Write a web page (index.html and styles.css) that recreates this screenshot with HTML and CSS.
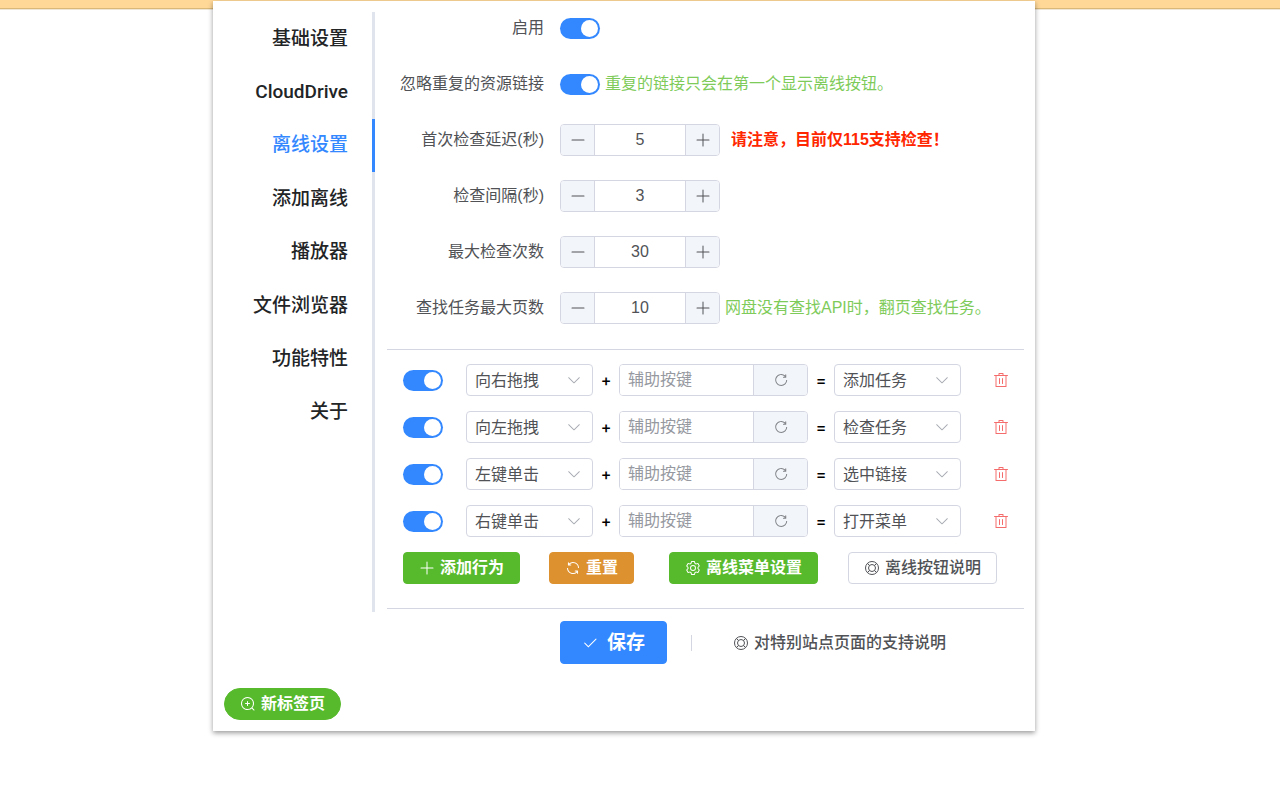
FILE: index.html
```html
<!DOCTYPE html>
<html lang="zh-CN">
<head>
    <meta charset="utf-8">
    <meta name="viewport" content="width=device-width, initial-scale=1">
    <title>离线设置</title>
    <link rel="stylesheet" href="styles.css">
</head>
<body>
    <svg class="sprite" aria-hidden="true">
        <symbol id="plus" viewBox="0 0 1024 1024"><path d="M480 480V128a32 32 0 0 1 64 0v352h352a32 32 0 1 1 0 64H544v352a32 32 0 1 1-64 0V544H128a32 32 0 0 1 0-64z"/></symbol>
        <symbol id="minus" viewBox="0 0 1024 1024"><path d="M128 544h768a32 32 0 1 0 0-64H128a32 32 0 0 0 0 64z"/></symbol>
        <symbol id="check" viewBox="0 0 1024 1024"><path d="M406.656 706.944 195.84 496.256a32 32 0 1 0-45.248 45.248l256 256 512-512a32 32 0 0 0-45.248-45.248L406.592 706.944z"/></symbol>
        <symbol id="arrow" viewBox="0 0 1024 1024"><path d="M831.872 340.864 512 652.672 192.128 340.864a30.592 30.592 0 0 0-42.752 0 29.12 29.12 0 0 0 0 41.6L489.664 714.24a32 32 0 0 0 44.672 0l340.288-331.712a29.12 29.12 0 0 0 0-41.728 30.592 30.592 0 0 0-42.752 0z"/></symbol>
        <symbol id="reload" viewBox="0 0 1024 1024"><path d="M784.512 230.272v-50.56a32 32 0 1 1 64 0v149.056a32 32 0 0 1-32 32H667.52a32 32 0 1 1 0-64h92.992A320 320 0 1 0 524.8 833.152a320 320 0 0 0 320-320h64a384 384 0 0 1-384 384 384 384 0 0 1-384-384 384 384 0 0 1 643.712-282.88z"/></symbol>
        <symbol id="refresh" viewBox="0 0 1024 1024"><path d="M771.776 794.88A384 384 0 0 1 128 512h64a320 320 0 0 0 555.712 216.448H654.72a32 32 0 1 1 0-64h149.056a32 32 0 0 1 32 32v148.928a32 32 0 1 1-64 0v-50.56zM276.288 295.616h92.992a32 32 0 0 1 0 64H220.16a32 32 0 0 1-32-32V178.56a32 32 0 0 1 64 0v50.56A384 384 0 0 1 896.128 512h-64a320 320 0 0 0-555.776-216.384z"/></symbol>
        <symbol id="trash" viewBox="0 0 1024 1024"><path d="M160 256H96a32 32 0 0 1 0-64h256V95.936a32 32 0 0 1 32-32h256a32 32 0 0 1 32 32V192h256a32 32 0 1 1 0 64h-64v672a32 32 0 0 1-32 32H192a32 32 0 0 1-32-32V256zm448-64v-64H416v64h192zM224 896h576V256H224v640zm192-128a32 32 0 0 1-32-32V416a32 32 0 0 1 64 0v320a32 32 0 0 1-32 32zm192 0a32 32 0 0 1-32-32V416a32 32 0 0 1 64 0v320a32 32 0 0 1-32 32z"/></symbol>
        <symbol id="zoom-in" viewBox="0 0 1024 1024"><path d="m795.904 750.72 124.992 124.928a32 32 0 0 1-45.248 45.248L750.656 795.904a416 416 0 1 1 45.248-45.248zM480 832a352 352 0 1 0 0-704 352 352 0 0 0 0 704zm-32-384v-96a32 32 0 0 1 64 0v96h96a32 32 0 0 1 0 64h-96v96a32 32 0 0 1-64 0v-96h-96a32 32 0 0 1 0-64h96z"/></symbol>
        <symbol id="setting" viewBox="0 0 1024 1024"><path d="M600.704 64a32 32 0 0 1 30.464 22.208l35.2 109.376c14.784 7.232 28.928 15.36 42.432 24.512l112.384-24.192a32 32 0 0 1 34.432 15.36L944.32 364.8a32 32 0 0 1-4.032 37.504l-77.12 85.12a357.12 357.12 0 0 1 0 49.024l77.12 85.248a32 32 0 0 1 4.032 37.504l-88.704 153.6a32 32 0 0 1-34.432 15.296L708.8 803.904c-13.44 9.088-27.648 17.28-42.368 24.512l-35.264 109.376A32 32 0 0 1 600.704 960H423.296a32 32 0 0 1-30.464-22.208L357.696 828.48a351.616 351.616 0 0 1-42.56-24.64l-112.32 24.256a32 32 0 0 1-34.432-15.36L79.68 659.2a32 32 0 0 1 4.032-37.504l77.12-85.248a357.12 357.12 0 0 1 0-48.896l-77.12-85.248A32 32 0 0 1 79.68 364.8l88.704-153.6a32 32 0 0 1 34.432-15.296l112.32 24.256c13.568-9.152 27.776-17.408 42.56-24.64l35.2-109.312A32 32 0 0 1 423.232 64H600.64zm-23.424 64H446.72l-36.352 113.088-24.512 11.968a294.113 294.113 0 0 0-34.816 20.096l-22.656 15.36-116.224-25.088-65.28 113.152 79.68 88.192-1.92 27.136a293.12 293.12 0 0 0 0 40.192l1.92 27.136-79.808 88.192 65.344 113.152 116.224-25.024 22.656 15.296a294.113 294.113 0 0 0 34.816 20.096l24.512 11.968L446.72 896h130.688l36.48-113.152 24.448-11.904a288.282 288.282 0 0 0 34.752-20.096l22.592-15.296 116.288 25.024 65.28-113.152-79.744-88.192 1.92-27.136a293.12 293.12 0 0 0 0-40.256l-1.92-27.136 79.808-88.128-65.344-113.152-116.288 24.96-22.592-15.232a287.616 287.616 0 0 0-34.752-20.096l-24.448-11.904L577.344 128zM512 320a192 192 0 1 1 0 384 192 192 0 0 1 0-384zm0 64a128 128 0 1 0 0 256 128 128 0 0 0 0-256z"/></symbol>
        <symbol id="help" viewBox="0 0 1024 1024">
            <g fill="none" stroke="currentColor" stroke-width="64">
                <circle cx="512" cy="512" r="416"/>
                <circle cx="512" cy="512" r="224"/>
                <path d="M218 218l136 136M806 218L670 354M218 806l136-136M806 806L670 670"/>
            </g>
        </symbol>
    </svg>

    <div class="topbar"></div>

    <main class="panel">
        <div class="panel-body">
            <nav class="tabs">
                <a class="tab" href="#base">基础设置</a>
                <a class="tab" href="#clouddrive">CloudDrive</a>
                <a class="tab active" href="#offline">离线设置</a>
                <a class="tab" href="#add">添加离线</a>
                <a class="tab" href="#player">播放器</a>
                <a class="tab" href="#files">文件浏览器</a>
                <a class="tab" href="#features">功能特性</a>
                <a class="tab" href="#about">关于</a>
            </nav>

            <form class="content" id="offline">
                <div class="fields">
                    <div class="field">
                        <label class="label" for="enable">启用</label>
                        <input class="switch" type="checkbox" id="enable" checked>
                    </div>
                    <div class="field">
                        <label class="label" for="ignore">忽略重复的资源链接</label>
                        <input class="switch" type="checkbox" id="ignore" checked>
                        <span class="tip">重复的链接只会在第一个显示离线按钮。</span>
                    </div>
                    <div class="field">
                        <label class="label" for="delay">首次检查延迟(秒)</label>
                        <div class="number">
                            <button type="button" aria-label="减少"><svg class="icon"><use href="#minus"/></svg></button>
                            <input type="text" id="delay" value="5">
                            <button type="button" aria-label="增加"><svg class="icon"><use href="#plus"/></svg></button>
                        </div>
                        <strong class="warn">请注意，目前仅115支持检查！</strong>
                    </div>
                    <div class="field">
                        <label class="label" for="interval">检查间隔(秒)</label>
                        <div class="number">
                            <button type="button" aria-label="减少"><svg class="icon"><use href="#minus"/></svg></button>
                            <input type="text" id="interval" value="3">
                            <button type="button" aria-label="增加"><svg class="icon"><use href="#plus"/></svg></button>
                        </div>
                    </div>
                    <div class="field">
                        <label class="label" for="times">最大检查次数</label>
                        <div class="number">
                            <button type="button" aria-label="减少"><svg class="icon"><use href="#minus"/></svg></button>
                            <input type="text" id="times" value="30">
                            <button type="button" aria-label="增加"><svg class="icon"><use href="#plus"/></svg></button>
                        </div>
                    </div>
                    <div class="field">
                        <label class="label" for="pages">查找任务最大页数</label>
                        <div class="number">
                            <button type="button" aria-label="减少"><svg class="icon"><use href="#minus"/></svg></button>
                            <input type="text" id="pages" value="10">
                            <button type="button" aria-label="增加"><svg class="icon"><use href="#plus"/></svg></button>
                        </div>
                        <span class="tip">网盘没有查找API时，翻页查找任务。</span>
                    </div>
                </div>

                <div class="actions">
                    <div class="action">
                        <input class="switch" type="checkbox" aria-label="启用" checked>
                        <div class="select">
                            <select aria-label="动作"><option>向右拖拽</option></select>
                            <svg class="icon"><use href="#arrow"/></svg>
                        </div>
                        <span class="sign">+</span>
                        <div class="keys">
                            <input type="text" placeholder="辅助按键" aria-label="辅助按键">
                            <button type="button" aria-label="清除"><svg class="icon"><use href="#reload"/></svg></button>
                        </div>
                        <span class="sign">=</span>
                        <div class="select">
                            <select aria-label="行为"><option>添加任务</option></select>
                            <svg class="icon"><use href="#arrow"/></svg>
                        </div>
                        <button class="delete" type="button" aria-label="删除"><svg class="icon"><use href="#trash"/></svg></button>
                    </div>
                    <div class="action">
                        <input class="switch" type="checkbox" aria-label="启用" checked>
                        <div class="select">
                            <select aria-label="动作"><option>向左拖拽</option></select>
                            <svg class="icon"><use href="#arrow"/></svg>
                        </div>
                        <span class="sign">+</span>
                        <div class="keys">
                            <input type="text" placeholder="辅助按键" aria-label="辅助按键">
                            <button type="button" aria-label="清除"><svg class="icon"><use href="#reload"/></svg></button>
                        </div>
                        <span class="sign">=</span>
                        <div class="select">
                            <select aria-label="行为"><option>检查任务</option></select>
                            <svg class="icon"><use href="#arrow"/></svg>
                        </div>
                        <button class="delete" type="button" aria-label="删除"><svg class="icon"><use href="#trash"/></svg></button>
                    </div>
                    <div class="action">
                        <input class="switch" type="checkbox" aria-label="启用" checked>
                        <div class="select">
                            <select aria-label="动作"><option>左键单击</option></select>
                            <svg class="icon"><use href="#arrow"/></svg>
                        </div>
                        <span class="sign">+</span>
                        <div class="keys">
                            <input type="text" placeholder="辅助按键" aria-label="辅助按键">
                            <button type="button" aria-label="清除"><svg class="icon"><use href="#reload"/></svg></button>
                        </div>
                        <span class="sign">=</span>
                        <div class="select">
                            <select aria-label="行为"><option>选中链接</option></select>
                            <svg class="icon"><use href="#arrow"/></svg>
                        </div>
                        <button class="delete" type="button" aria-label="删除"><svg class="icon"><use href="#trash"/></svg></button>
                    </div>
                    <div class="action">
                        <input class="switch" type="checkbox" aria-label="启用" checked>
                        <div class="select">
                            <select aria-label="动作"><option>右键单击</option></select>
                            <svg class="icon"><use href="#arrow"/></svg>
                        </div>
                        <span class="sign">+</span>
                        <div class="keys">
                            <input type="text" placeholder="辅助按键" aria-label="辅助按键">
                            <button type="button" aria-label="清除"><svg class="icon"><use href="#reload"/></svg></button>
                        </div>
                        <span class="sign">=</span>
                        <div class="select">
                            <select aria-label="行为"><option>打开菜单</option></select>
                            <svg class="icon"><use href="#arrow"/></svg>
                        </div>
                        <button class="delete" type="button" aria-label="删除"><svg class="icon"><use href="#trash"/></svg></button>
                    </div>
                    <div class="tools">
                        <button class="btn success" type="button"><svg class="icon"><use href="#plus"/></svg>添加行为</button>
                        <button class="btn warning" type="button"><svg class="icon"><use href="#refresh"/></svg>重置</button>
                        <button class="btn success" type="button"><svg class="icon"><use href="#setting"/></svg>离线菜单设置</button>
                        <button class="btn" type="button"><svg class="icon"><use href="#help"/></svg>离线按钮说明</button>
                    </div>
                </div>

                <div class="submit">
                    <button class="btn primary large" type="submit"><svg class="icon"><use href="#check"/></svg>保存</button>
                    <span class="divider"></span>
                    <a class="help-link" href="#help"><svg class="icon"><use href="#help"/></svg>对特别站点页面的支持说明</a>
                </div>
            </form>
        </div>

        <button class="btn success round" type="button"><svg class="icon"><use href="#zoom-in"/></svg>新标签页</button>
    </main>
</body>
</html>
```
FILE: styles.css
```css
* {
    box-sizing: border-box;
}

body {
    min-height: 100vh;
    margin: 0;
    padding-right: 32px;
    background: #fff;
    color: #505256;
    font-family: "Liberation Sans", "Noto Sans CJK SC", sans-serif;
    font-size: 16px;
    line-height: 32px;
}

button,
input,
select {
    margin: 0;
    padding: 0;
    color: inherit;
    font: inherit;
}

a {
    color: inherit;
    text-decoration: none;
}

.sprite {
    position: absolute;
    width: 0;
    height: 0;
}

.icon {
    flex: none;
    width: 16px;
    height: 16px;
    fill: currentColor;
}

/* page header behind the panel */
.topbar {
    height: 9px;
    margin-right: -32px;
    background: #ffd898;
    border-bottom: 1px solid #d9b878;
    box-shadow: 0 1px 0 #efe6d6;
}

.panel {
    position: relative;
    max-width: 822px;
    margin: -8px auto 0;
    padding: 11px;
    background: #fff;
    box-shadow: 0 2px 5px rgba(0, 0, 0, 0.4);
}

.panel-body {
    display: flex;
    align-items: flex-start;
    gap: 12px;
    margin-bottom: 24px;
}

/* tabs */
.tabs {
    display: grid;
    grid-template-rows: repeat(8, 1fr);
    flex: none;
    width: 151px;
    height: 600px;
    padding-bottom: 173px;
    border-right: 3px solid #dfe4ed;
}

.tab {
    display: flex;
    align-items: center;
    justify-content: flex-end;
    margin-right: -3px;
    padding-right: 24px;
    border-right: 3px solid transparent;
    color: #222426;
    font-family: Roboto, "Noto Sans CJK SC", sans-serif;
    font-size: 19px;
    font-weight: 500;
}

.tab.active {
    color: #3388ff;
    border-color: #3388ff;
}

/* form */
.content {
    flex: 1;
    min-width: 0;
}

.fields {
    display: grid;
    gap: 24px;
    padding-bottom: 25px;
}

.field {
    display: flex;
    align-items: center;
    height: 32px;
    line-height: 34px;
}

.label {
    width: 157px;
    margin-right: 16px;
    text-align: right;
    white-space: nowrap;
}

.switch {
    appearance: none;
    display: flex;
    justify-content: flex-end;
    flex: none;
    width: 40px;
    height: 21px;
    padding: 2px;
    border-radius: 11px;
    background: #3388ff;
}

.switch::before {
    content: "";
    width: 17px;
    height: 17px;
    border-radius: 50%;
    background: #fff;
}

.switch:not(:checked) {
    justify-content: flex-start;
    background: #dcdfe6;
}

.tip {
    margin-left: 5px;
    color: #7ecb5a;
}

.warn {
    margin-left: 11px;
    color: #ff2600;
}

.number,
.keys {
    display: flex;
    height: 32px;
    border: 1px solid #d4d7e2;
    border-radius: 4px;
    overflow: hidden;
}

.number {
    width: 160px;
}

.number input,
.keys input {
    flex: 1;
    min-width: 0;
    border: 0;
    background: #fff;
}

.number input {
    text-align: center;
}

.number button,
.keys button {
    display: flex;
    align-items: center;
    justify-content: center;
    width: 34px;
    border: 0;
    border-left: 1px solid #d4d7e2;
    background: #f2f5fa;
}

.number button:first-child {
    border-left: 0;
    border-right: 1px solid #d4d7e2;
}

/* mouse actions */
.actions {
    display: grid;
    gap: 15px;
    padding: 14px 15px 24px 16px;
    border: solid #d4d7e2;
    border-width: 1px 0;
}

.action {
    display: flex;
    align-items: center;
}

.select {
    position: relative;
    width: 127px;
}

.switch + .select {
    margin-left: 23px;
}

.select select {
    appearance: none;
    display: block;
    width: 100%;
    height: 32px;
    padding: 0 32px 0 8px;
    border: 1px solid #d4d7e2;
    border-radius: 4px;
    background: #fff;
}

.select .icon {
    position: absolute;
    top: 8px;
    right: 11px;
    color: #a8abb2;
    pointer-events: none;
}

.sign {
    width: 26px;
    color: #000;
    font-family: Inter, sans-serif;
    font-weight: 500;
    text-align: center;
}

.keys {
    width: 189px;
}

.keys input {
    padding-left: 8px;
}

.keys input::placeholder {
    color: #96999f;
}

.keys button {
    width: 54px;
    color: #808388;
}

.delete {
    display: flex;
    margin-left: auto;
    border: 0;
    background: none;
    color: #f56c6c;
}

/* buttons */
.tools {
    display: grid;
    grid-template-columns: 146px 120px 179px auto;
    justify-content: start;
}

.btn {
    display: inline-flex;
    align-items: center;
    justify-self: start;
    gap: 5px;
    height: 32px;
    padding: 0 15px;
    border: 1px solid #d4d7e2;
    border-radius: 4px;
    background: #fff;
    font-weight: 500;
    white-space: nowrap;
}

.btn.success {
    border-color: #57ba2c;
    background: #57ba2c;
    color: #fff;
    font-weight: 700;
}

.btn.warning {
    border-color: #dd912f;
    background: #dd912f;
    color: #fff;
    font-weight: 700;
}

.btn.primary {
    border-color: #3388ff;
    background: #3388ff;
    color: #fff;
    font-weight: 700;
}

.btn.large {
    height: 43px;
    padding: 0 21px;
    gap: 9px;
    font-size: 19px;
}

.btn.round {
    display: flex;
    width: fit-content;
    border-radius: 16px;
}

.submit {
    display: flex;
    align-items: center;
    padding: 12px 0 0 173px;
}

.divider {
    width: 1px;
    height: 16px;
    margin: 0 41px 0 24px;
    background: #d4d7e2;
}

.help-link {
    display: flex;
    align-items: center;
    gap: 5px;
    font-weight: 500;
}
```
